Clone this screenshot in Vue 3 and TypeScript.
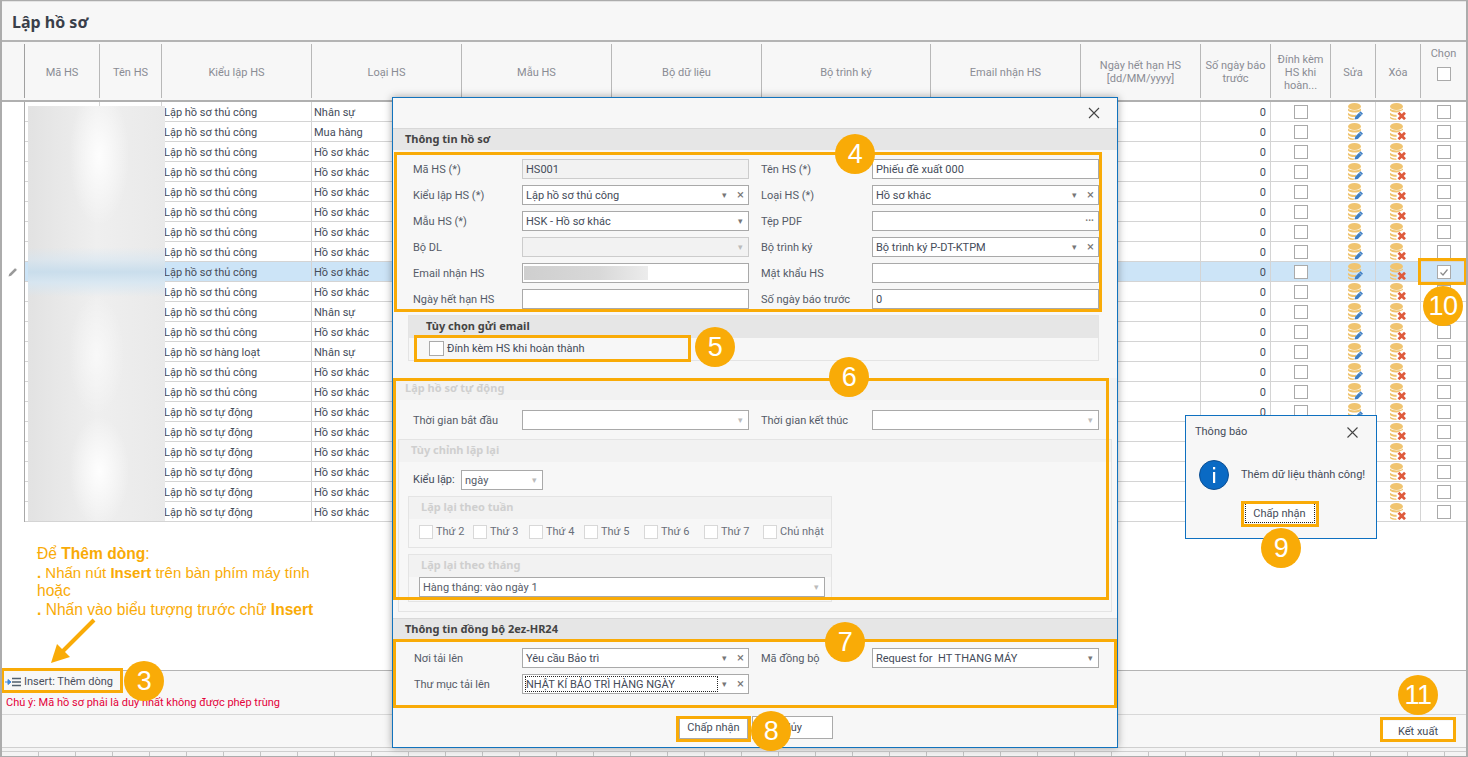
<script setup lang="ts">
interface Row { kieu: string; loai: string; sel?: boolean; chon?: boolean }
const T = 'Lập hồ sơ thủ công'
const A = 'Lập hồ sơ tự động'
const K = 'Hồ sơ khác'
const N = 'Nhân sự'
const rows: Row[] = [
  { kieu: T, loai: N }, { kieu: T, loai: 'Mua hàng' },
  { kieu: T, loai: K }, { kieu: T, loai: K }, { kieu: T, loai: K },
  { kieu: T, loai: K }, { kieu: T, loai: K }, { kieu: T, loai: K },
  { kieu: T, loai: K, sel: true, chon: true }, { kieu: T, loai: K },
  { kieu: T, loai: N }, { kieu: T, loai: K },
  { kieu: 'Lập hồ sơ hàng loạt', loai: N },
  { kieu: T, loai: K }, { kieu: T, loai: K },
  { kieu: A, loai: K }, { kieu: A, loai: K }, { kieu: A, loai: K },
  { kieu: A, loai: K }, { kieu: A, loai: K }, { kieu: A, loai: K },
]
const heads = ['Mã HS', 'Tên HS', 'Kiểu lập HS', 'Loại HS', 'Mẫu HS', 'Bộ dữ liệu', 'Bộ trình ký', 'Email nhận HS']
const days = [
  { t: 'Thứ 2', w: 54 }, { t: 'Thứ 3', w: 56 }, { t: 'Thứ 4', w: 55 }, { t: 'Thứ 5', w: 60 },
  { t: 'Thứ 6', w: 60 }, { t: 'Thứ 7', w: 59 }, { t: 'Chủ nhật', w: 56 },
]
const badges = [
  { n: '3', x: 144, y: 681 }, { n: '4', x: 855, y: 154 }, { n: '5', x: 715, y: 347 },
  { n: '6', x: 849, y: 377 }, { n: '7', x: 845, y: 642 }, { n: '8', x: 771, y: 731 },
  { n: '9', x: 1281, y: 548 }, { n: '10', x: 1443, y: 306 }, { n: '11', x: 1418, y: 695 },
]
const marks = [
  { x: 394, y: 152, w: 708, h: 160 }, { x: 414, y: 335, w: 277, h: 27 },
  { x: 393, y: 378, w: 716, h: 222 }, { x: 393, y: 639, w: 724, h: 69 },
  { x: 676, y: 716, w: 75, h: 26 }, { x: 1241, y: 501, w: 78, h: 26 },
  { x: 1418, y: 258, w: 49, h: 27 }, { x: 1380, y: 717, w: 76, h: 25 }, { x: 1, y: 668, w: 122, h: 25 },
]
</script>

<template>
  <div class="page">
    <header class="title">Lập hồ sơ</header>

    <section class="grid">
      <div class="cols head">
        <div class="hc"></div>
        <div v-for="h in heads" :key="h" class="hc">{{ h }}</div>
        <div class="hc">Ngày hết hạn HS<br />[dd/MM/yyyy]</div>
        <div class="hc">Số ngày báo<br />trước</div>
        <div class="hc">Đính kèm<br />HS khi<br />hoàn...</div>
        <div class="hc">Sửa</div>
        <div class="hc">Xóa</div>
        <div class="hc chon"><span>Chọn</span><i class="cb"></i></div>
      </div>
      <div v-for="(r, i) in rows" :key="i" class="cols row" :class="{ sel: r.sel }">
        <div class="ind">
          <svg v-if="r.sel" width="12" height="12" viewBox="0 0 12 12"><path d="M1.500 10.500l.7-2.600 6-6 1.900 1.900-6 6z" fill="#999" /><path d="M8.200 1.900l1.900 1.900" stroke="#e8e8e8" stroke-width=".8" /></svg>
        </div>
        <div class="c"></div>
        <div class="c"></div>
        <div class="c">{{ r.kieu }}</div>
        <div class="c">{{ r.loai }}</div>
        <div class="c"></div>
        <div class="c"></div>
        <div class="c"></div>
        <div class="c"></div>
        <div class="c"></div>
        <div class="c num">0</div>
        <div class="c mid"><i class="cb"></i></div>
        <div class="c mid edit">
          <svg class="ico" width="15" height="17" viewBox="0 0 15 17">
            <ellipse cx="6.500" cy="3.500" rx="6.500" ry="3.500" fill="#f0c470" />
            <path d="M0 5.500C2 8 11 8 13 5.500V7.500C11 10.200 2 10.200 0 7.500Z" fill="#f0c470" />
            <path d="M0 9.800C2 12 6 12.200 8.500 11.800L7 14C4 14.200 1 13.300 0 12Z" fill="#f0c470" />
            <path d="M0 13.500C1.500 15 4 15.500 6 15.500L5.500 17C3 17 .5 16.200 0 15Z" fill="#f0c470" />
            <path d="M6.500 16.500L7.300 13.500 12.500 8.300 15 10.800 9.800 16Z" fill="#3f7fc4" />
            <path d="M11.200 9.600l2.500 2.500" stroke="#dbe7f3" stroke-width=".6" />
          </svg>
        </div>
        <div class="c mid">
          <svg class="ico" width="16" height="17" viewBox="0 0 16 17">
            <ellipse cx="6.500" cy="3.500" rx="6.500" ry="3.500" fill="#f0c470" />
            <path d="M0 5.500C2 8 11 8 13 5.500V7L7 9.400C4 9.600 1 9 0 7.500Z" fill="#f0c470" />
            <path d="M0 9.800C2 11.500 4.500 11.800 6.500 11.800L6.800 13.800C4 14 1 13.300 0 12Z" fill="#f0c470" />
            <path d="M0 13.500C1.500 15 4 15.500 6 15.500L6.800 17C3 17 .5 16.200 0 15Z" fill="#f0c470" />
            <path d="M8.500 9.800L15 16.200M15 9.800L8.500 16.200" stroke="#de5a3c" stroke-width="2.700" />
          </svg>
        </div>
        <div class="c mid">
          <i class="cb" :class="{ on: r.chon }">
            <svg v-if="r.chon" width="12" height="12" viewBox="0 0 12 12"><path d="M2.500 6.500l2.500 2.500 4.500-5.500" fill="none" stroke="#8a8a8a" stroke-width="1.200" /></svg>
          </i>
        </div>
      </div>
      <div class="blur"></div>
    </section>

    <section class="bar-insert">
      <div class="ins">
        <svg width="16" height="10" viewBox="0 0 16 10">
          <path d="M0 5h3V2.500L6 5 3 7.500V5" fill="#3f87d9" stroke="#3f87d9" />
          <path d="M7 1.500h9M7 5h9M7 8.500h9" stroke="#52606e" stroke-width="1.600" />
        </svg>
        <span>Insert: Thêm dòng</span>
      </div>
      <p class="warn">Chú ý: Mã hồ sơ phải là duy nhất không được phép trùng</p>
    </section>
    <section class="bar-actions"><button class="btn-out">Kết xuất</button></section>
    <div class="strip"><div class="ticks"></div></div>

    <!-- Hướng dẫn -->
    <div class="guide">
      Để <b>Thêm dòng</b>:<br />
      <span class="l2"><b>.</b> Nhấn nút <b>Insert</b> trên bàn phím máy tính</span><br />
      hoặc<br />
      <b>.</b> Nhấn vào biểu tượng trước chữ <b>Insert</b>
    </div>
    <svg class="arrow" width="50" height="50" viewBox="0 0 50 50">
      <path d="M44 2L13 33" stroke="#f9ab07" stroke-width="4" />
      <path d="M1 45l6-19 13 13z" fill="#f9ab07" />
    </svg>

    <!-- Hộp thoại -->
    <div class="modal">
      <div class="m-top">
        <svg width="12" height="12" viewBox="0 0 12 12"><path d="M1 1l10 10M11 1L1 11" stroke="#444" stroke-width="1.100" /></svg>
      </div>
      <div class="sec">Thông tin hồ sơ</div>
      <div class="form">
        <label>Mã HS (*)</label><div class="in dis">HS001</div>
        <label>Tên HS (*)</label><div class="in">Phiếu đề xuất 000</div>
        <label>Kiểu lập HS (*)</label><div class="in">Lập hồ sơ thủ công<span class="dd">▾</span><span class="xx">×</span></div>
        <label>Loại HS (*)</label><div class="in">Hồ sơ khác<span class="dd">▾</span><span class="xx">×</span></div>
        <label>Mẫu HS (*)</label><div class="in">HSK - Hồ sơ khác<span class="dd end">▾</span></div>
        <label>Tệp PDF</label><div class="in"><span class="dots">...</span></div>
        <label>Bộ DL</label><div class="in dis"><span class="dd end lt">▾</span></div>
        <label>Bộ trình ký</label><div class="in">Bộ trình ký P-DT-KTPM<span class="dd">▾</span><span class="xx">×</span></div>
        <label>Email nhận HS</label><div class="in"><span class="mail"></span></div>
        <label>Mật khẩu HS</label><div class="in"></div>
        <label>Ngày hết hạn HS</label><div class="in"></div>
        <label>Số ngày báo trước</label><div class="in">0</div>
      </div>
      <div class="grp mail-grp">
        <div class="grp-h">Tùy chọn gửi email</div>
        <div class="att"><i class="cb big"></i><span>Đính kèm HS khi hoàn thành</span></div>
      </div>
      <div class="sec off auto">Lập hồ sơ tự động</div>
      <div class="form times">
        <label>Thời gian bắt đầu</label><div class="in"><span class="dd end lt">▾</span></div>
        <label>Thời gian kết thúc</label><div class="in"><span class="dd end lt">▾</span></div>
      </div>
      <div class="grp custom">
        <div class="grp-h off">Tùy chỉnh lặp lại</div>
        <div class="kind"><span>Kiểu lặp:</span><div class="in small">ngày<span class="dd end lt">▾</span></div></div>
        <div class="grp sub">
          <div class="grp-h off">Lặp lại theo tuần</div>
          <div class="week">
            <div v-for="d in days" :key="d.t" class="day" :style="{ width: d.w + 'px' }"><i class="cb lt"></i><span>{{ d.t }}</span></div>
          </div>
        </div>
        <div class="grp sub month">
          <div class="grp-h off">Lặp lại theo tháng</div>
          <div class="in wide">Hàng tháng: vào ngày 1<span class="dd end lt">▾</span></div>
        </div>
      </div>
      <div class="sec sync">Thông tin đồng bộ 2ez-HR24</div>
      <div class="form syncf">
        <label>Nơi tải lên</label><div class="in">Yêu cầu Bảo trì<span class="dd">▾</span><span class="xx">×</span></div>
        <label>Mã đồng bộ</label><div class="in">Request for&nbsp; HT THANG MÁY<span class="dd end">▾</span></div>
        <label>Thư mục tải lên</label><div class="in focus"><span class="dotted">NHẬT KÍ BẢO TRÌ HÀNG NGÀY</span><span class="dd">▾</span><span class="xx">×</span></div>
      </div>
      <div class="m-foot">
        <button class="b1">Chấp nhận</button>
        <button class="b2">Hủy</button>
      </div>
    </div>

    <!-- Thông báo -->
    <div class="note">
      <div class="n-top"><span>Thông báo</span>
        <svg width="11" height="11" viewBox="0 0 11 11"><path d="M.5.500l10 10M10.500.500l-10 10" stroke="#444" stroke-width="1.100" /></svg>
      </div>
      <div class="n-body">
        <svg width="30" height="30" viewBox="0 0 30 30">
          <circle cx="15" cy="15" r="14.500" fill="#0a6ac4" stroke="#0d4f92" />
          <rect x="14" y="12" width="2.200" height="11" fill="#fff" />
          <rect x="14" y="7" width="2.200" height="2.400" fill="#fff" />
        </svg>
        <span>Thêm dữ liệu thành công!</span>
      </div>
      <div class="n-foot"><button>Chấp nhận</button></div>
    </div>

    <i v-for="(m, i) in marks" :key="'m' + i" class="mark"
      :style="{ left: m.x + 'px', top: m.y + 'px', width: m.w + 'px', height: m.h + 'px' }"></i>
    <b v-for="c in badges" :key="c.n" class="badge" :style="{ left: c.x - 20 + 'px', top: c.y - 20 + 'px' }">{{ c.n }}</b>
  </div>
</template>

<style>
html, body { margin: 0; background: #fff; }
</style>

<style scoped>
.page {
  position: relative; width: 1468px; height: 757px; overflow: hidden; box-sizing: border-box;
  border: 2px solid #acacac; border-bottom-width: 1px; border-top-width: 1px;
  display: flex; flex-direction: column; background: #fff;
  font: 11px/14px Roboto, sans-serif; color: #444b59;
}
.title {
  height: 39px; flex: none; box-sizing: border-box; padding: 11px 10px 0; background: #f7f7f7;
  font: bold 16px/18px "Noto Sans", sans-serif; color: #3a3f4a; border-top: 1px solid #e4e4e4;
}
.grid { position: relative; flex: none; height: 630px; border-top: 2px solid #b4b4b4; box-sizing: border-box; }
.cols {
  display: grid;
  grid-template-columns: 23px 75px 62px 150px 150px 150px 150px 169px 150px 120px 70px 60px 45px 45px 1fr;
}
.head { height: 58px; background: #f7f7f7; border-bottom: 2px solid #b0b0b0; }
.hc {
  display: flex; align-items: center; justify-content: center; text-align: center; color: #8a8c94;
  margin: 2px 0; padding-top: 2px; box-sizing: border-box; border-right: 1px solid #b8b8b8; line-height: 13px; font-size: 11px;
}
.hc:last-child { border-right: 0; }
.hc:first-child { border-right-color: #a0a0a0; }
.chon { flex-direction: column; justify-content: flex-start; padding-top: 3px; gap: 7px; }
.row { height: 20px; box-sizing: border-box; }
.row .c { border-right: 1px solid #d4d4d4; border-bottom: 1px solid #d4d4d4; padding: 1px 0 0 2px; line-height: 19px; overflow: hidden; white-space: nowrap; }
.ind { border-right: 1px solid #a8a8a8; display: flex; align-items: center; justify-content: center; }
.sel .c { background: #cce4f7; }
.row .num { text-align: right; padding-right: 4px; color: #444b59; }
.row .mid { display: flex; align-items: center; justify-content: center; padding: 0; }
.row .edit { padding-left: 4px; }
.row .c.mid:last-child { border-right: 0; }
.ico { display: block; }
.cb {
  display: inline-flex; align-items: center; justify-content: center; width: 12px; height: 12px;
  border: 1px solid #aaa; background: #fff; flex: none;
}
.blur {
  position: absolute; left: 26px; top: 64px; width: 137px; height: 415px;
  background:
    radial-gradient(ellipse 30px 70px at 52% 12%, rgba(255,255,255,.9), transparent),
    radial-gradient(ellipse 30px 55px at 52% 88%, rgba(255,255,255,.95), transparent),
    radial-gradient(ellipse 28px 60px at 50% 60%, rgba(255,255,255,.6), transparent),
    linear-gradient(180deg, transparent 34%, rgba(212,229,242,.55) 37%, rgba(200,221,236,.95) 40%, rgba(212,230,243,.8) 42.500%, transparent 46%),
    linear-gradient(90deg, #e2e2e2, #efefef 50%, #e9e9e9);
}
.bar-insert { flex: none; height: 44px; background: #f7f7f7; border-top: 1px solid #b4b4b4; box-sizing: border-box; }
.ins { display: flex; align-items: center; gap: 3px; height: 22px; padding-left: 3px; color: #4a4f5c; }
.warn { margin: 3px 0 0 4px; color: #e4023a; font-size: 11px; line-height: 14px; }
.bar-actions {
  flex: none; height: 34px; box-sizing: border-box; background: #f7f7f7; border-top: 1px solid #d8d8d8; border-bottom: 1px solid #cfcfcf;
  display: flex; justify-content: flex-end; align-items: center; padding: 0 13px 0 0;
}
.btn-out { width: 70px; height: 20px; padding: 0; border: 0; background: #fff; color: #444b59; font: 11px Roboto, sans-serif; }
.strip { flex: 1; background: #f4f4f4; padding-top: 3px; display: flex; }
.ticks { flex: 1; border-top: 1px solid #cfcfcf; background: repeating-linear-gradient(90deg, #f4f4f4 0 36px, #c4c4c4 36px 37px); }

.guide {
  position: absolute; left: 35px; top: 544px; width: 300px; color: #f9ab07;
  font: 15.600px/18.600px "Liberation Sans", sans-serif;
}
.l2 { font-size: 15px; }
.arrow { position: absolute; left: 48px; top: 617px; }

.modal {
  position: absolute; left: 390px; top: 96px; width: 726px; height: 651px; box-sizing: border-box;
  background: #f7f7f7; border: 1px solid #1273bd; box-shadow: 0 0 8px rgba(0,0,0,.35);
  display: flex; flex-direction: column;
}
.m-top { height: 30px; flex: none; display: flex; justify-content: flex-end; align-items: center; padding-right: 17px; }
.sec {
  flex: none; height: 22px; background: #e6e6e6; border-top: 1px solid #d8d8d8; box-sizing: border-box;
  font: 700 11px/20px "Noto Sans", sans-serif; padding-left: 12px; color: #444;
}
.form {
  display: grid; grid-template-columns: 109px 239px 111px 227px; grid-auto-rows: 20px; row-gap: 6px;
  padding: 9px 0 0 20px; align-items: center; flex: none;
}
.form label { color: #555b68; padding-top: 2px; }
.in {
  position: relative; height: 20px; box-sizing: border-box; border: 1px solid #a9a9a9; background: #fff;
  padding: 1px 0 0 3px; line-height: 18px; color: #444b59; white-space: nowrap;
}
.form .in { width: 227px; }
.in.dis { background: #f2f2f2; border-color: #ccc; }
.dd { position: absolute; right: 21px; top: 0; color: #777; font-size: 9px; line-height: 18px; }
.dd.end { right: 5px; }
.dd.lt { color: #bbb; }
.xx { position: absolute; right: 4px; top: 0; color: #777; font-size: 13px; line-height: 17px; }
.dots { position: absolute; right: 4px; top: -3px; font-size: 10px; color: #777; font-weight: 700; }
.mail { position: absolute; left: 1px; top: 2px; width: 124px; height: 14px; background: linear-gradient(90deg, #cfcfcf, #d8d8d8 60%, #ececec); }

.grp { border: 1px solid #e4e4e4; box-sizing: border-box; flex: none; }
.grp-h { height: 22px; background: #e6e6e6; font: 700 11px/20px "Noto Sans", sans-serif; padding-left: 12px; color: #444; box-sizing: border-box; }
.off { color: #cfcfcf !important; background: #f2f2f2 !important; border-color: #ececec; }
.mail-grp { margin: 6px 18px 0 15px; height: 46px; }
.mail-grp .grp-h { padding-left: 17px; line-height: 19px; }
.att { display: flex; align-items: center; height: 21px; padding-left: 20px; gap: 3px; }
.cb.big { width: 13px; height: 13px; }
.auto { margin-top: 17px; height: 22px; border-top: 0; }
.times { padding-top: 10px; }
.custom { margin: 9px 5px 0 5px; height: 173px; }
.kind { display: flex; align-items: center; gap: 7px; padding: 8px 0 0 14px; height: 20px; }
.kind > span { width: 41px; white-space: nowrap; }
.kind .small { width: 82px; }
.sub { margin: 6px 0 0 9px; width: 424px; height: 52px; }
.month { height: 48px; }
.week { display: flex; padding: 6px 0 0 10px; }
.day { display: flex; align-items: center; gap: 3px; flex: none; color: #6a6f7a; white-space: nowrap; }
.cb.lt { border-color: #d8d8d8; }
.wide { margin: 0 6px 0 10px; }
.wide, .kind .small { color: #555b68; }
.sync { margin-top: 6px; height: 21px; }
.syncf { padding: 9px 0 0 21px; grid-template-columns: 108px 239px 111px 227px; }
.focus { padding: 0 0 0 2px; }
.dotted { display: block; width: 193px; height: 16px; margin-top: 1px; line-height: 15px; border: 1px dotted #222; box-sizing: border-box; }
.m-foot { flex: 1; display: flex; align-items: flex-start; padding: 22px 0 0 286px; gap: 4px; }
.m-foot button { height: 23px; border: 1px solid #aaa; background: #fff; font: 11px Roboto, sans-serif; color: #444b59; padding: 0; }
.b1 { width: 69px; }
.b2 { width: 81px; }

.note {
  position: absolute; left: 1183px; top: 414px; width: 192px; height: 124px; box-sizing: border-box;
  background: #f7f7f7; border: 1px solid #0e70c0; font-size: 11px;
}
.n-top { display: flex; justify-content: space-between; align-items: center; padding: 9px 18px 0 9px; }
.n-body { display: flex; align-items: center; gap: 12px; padding: 21px 0 0 13px; }
.n-foot { display: flex; justify-content: center; padding-top: 13px; padding-right: 3px; }
.n-foot button { width: 70px; height: 20px; padding: 0; border: 1px dotted #222; background: #fff; color: #444b59; font: 11px Roboto, sans-serif; }

.mark { position: absolute; box-sizing: border-box; border: 3px solid #f9ab07; margin: -1px 0 0 -2px; }
.badge {
  position: absolute; width: 40px; height: 40px; margin: -1px 0 0 -2px; border-radius: 50%; background: #f9ab07; color: #fff;
  font: 400 27px/40px "Liberation Sans", sans-serif; text-align: center; letter-spacing: -.5px;
}
</style>
